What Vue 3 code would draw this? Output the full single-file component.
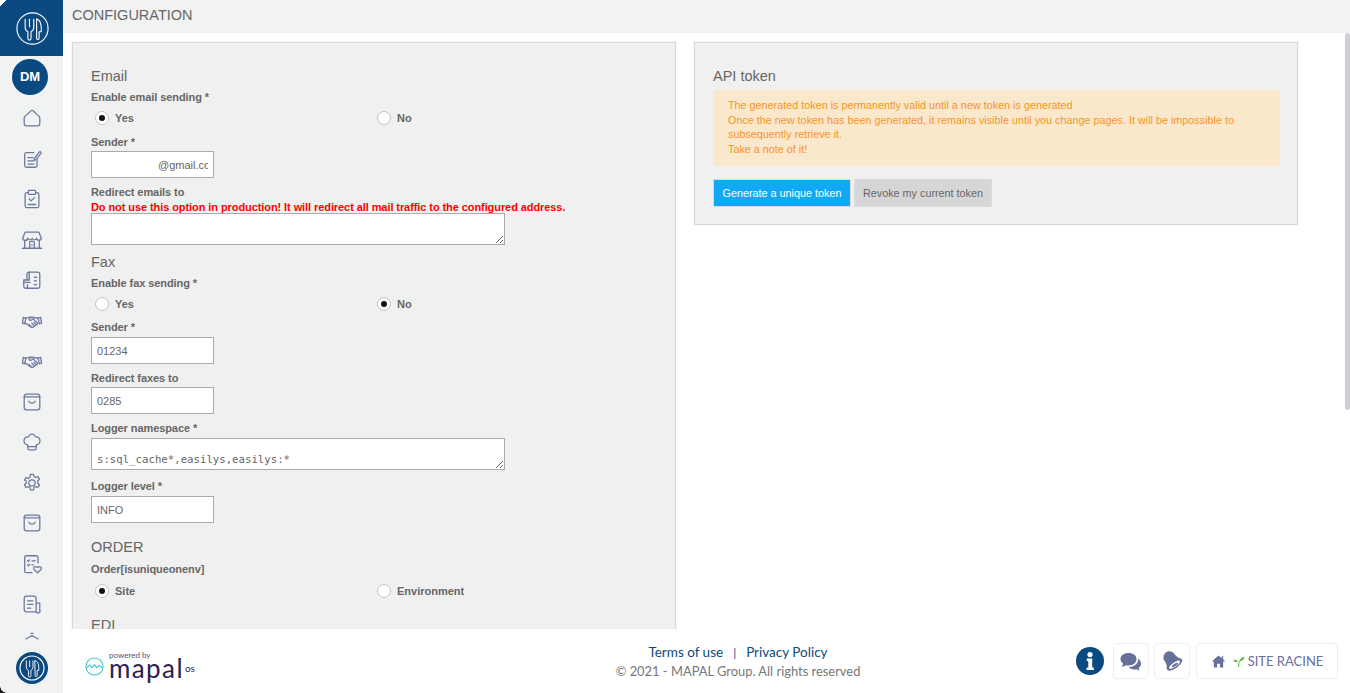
<template>
  <div class="page">
    <!-- sidebar -->
    <aside class="sidebar">
      <div class="brand">
        <svg class="brand-logo" viewBox="0 0 36 36" fill="none" stroke="#fff" stroke-width="1.2" stroke-linecap="round" stroke-linejoin="round">
          <circle cx="18" cy="18" r="17" />
          <path v-for="d in logoPaths" :key="d" :d="d" />
        </svg>
      </div>
      <div class="avatar">DM</div>
      <nav class="nav">
        <a v-for="(icon, i) in navIcons" :key="i" class="nav-item">
          <svg viewBox="0 0 24 24" fill="none" stroke="#6c789f" stroke-width="1.4" stroke-linecap="round" stroke-linejoin="round">
            <path v-for="d in icon" :key="d" :d="d" />
          </svg>
        </a>
        <div class="nav-more">
          <svg viewBox="0 0 14 8" fill="none" stroke="#6c789f" stroke-width="1.2" stroke-linecap="round">
            <path d="M1 7 7 3.5 13 7M6 1.4h2" />
          </svg>
        </div>
      </nav>
      <div class="side-bottom">
        <svg viewBox="0 0 36 36" fill="none" stroke="#fff" stroke-width="1.3" stroke-linecap="round" stroke-linejoin="round">
          <circle cx="18" cy="18" r="18" fill="#0b4a80" stroke="none" />
          <circle cx="18" cy="18" r="13.5" />
          <g transform="translate(3.6 3.6) scale(0.8)">
            <path v-for="d in logoPaths" :key="d" :d="d" />
          </g>
        </svg>
      </div>
    </aside>

    <div class="content">
      <header class="topbar">CONFIGURATION</header>

      <main class="main">
        <div class="panels">
          <!-- left panel -->
          <section class="panel">
            <h3 class="first">Email</h3>
            <label class="lbl">Enable email sending *</label>
            <div class="radios">
              <label class="radio"><input type="radio" name="mail" checked /> Yes</label>
              <label class="radio"><input type="radio" name="mail" /> No</label>
            </div>
            <label class="lbl">Sender *</label>
            <input class="field mail" type="text" value="@gmail.com" />
            <label class="lbl">Redirect emails to</label>
            <p class="danger">Do not use this option in production! It will redirect all mail traffic to the configured address.</p>
            <textarea class="area"></textarea>

            <h3>Fax</h3>
            <label class="lbl">Enable fax sending *</label>
            <div class="radios tight">
              <label class="radio"><input type="radio" name="fax" /> Yes</label>
              <label class="radio"><input type="radio" name="fax" checked /> No</label>
            </div>
            <label class="lbl gap">Sender *</label>
            <input class="field" type="text" value="01234" />
            <label class="lbl">Redirect faxes to</label>
            <input class="field" type="text" value="0285" />
            <label class="lbl gap">Logger namespace *</label>
            <textarea class="area mono" :value="loggerNs"></textarea>
            <label class="lbl gap">Logger level *</label>
            <input class="field" type="text" value="INFO" />

            <h3 class="order">ORDER</h3>
            <label class="lbl gap">Order[isuniqueonenv]</label>
            <div class="radios">
              <label class="radio"><input type="radio" name="order" checked /> Site</label>
              <label class="radio"><input type="radio" name="order" /> Environment</label>
            </div>
            <h3 class="edi">EDI</h3>
          </section>

          <!-- right panel -->
          <section class="panel token">
            <h3 class="first">API token</h3>
            <div class="alert">
              The generated token is permanently valid until a new token is generated<br />
              Once the new token has been generated, it remains visible until you change pages. It will be impossible to subsequently retrieve it.<br />
              Take a note of it!
            </div>
            <div class="actions">
              <button class="btn primary">Generate a unique token</button>
              <button class="btn">Revoke my current token</button>
            </div>
          </section>
        </div>
        <div class="scroll-thumb"></div>
      </main>

      <footer class="footer">
        <div class="mapal">
          <svg class="mapal-icon" viewBox="0 0 20 20" fill="none" stroke="#3fc3cf" stroke-width="1.1" stroke-linecap="round" stroke-linejoin="round">
            <circle cx="10" cy="10" r="9" />
            <path d="M1.5 11.5 5 8.5l2.5 3 2.5-3.5 2.5 3.5L15 9l3.5 2.5" />
          </svg>
          <div class="mapal-text">
            <span class="powered">powered by</span>
            <span class="mapal-word">mapal<small>os</small></span>
          </div>
        </div>

        <div class="legal">
          <div class="links"><a>Terms of use</a><span class="sep">|</span><a>Privacy Policy</a></div>
          <div class="copy">© 2021 - MAPAL Group. All rights reserved</div>
        </div>

        <div class="tools">
          <svg class="info" viewBox="0 0 28 28">
            <circle cx="14" cy="14" r="14" fill="#0b4a80" />
            <circle cx="14" cy="7.6" r="2.6" fill="#fff" />
            <path d="M10.8 11.6h5.4v9h1.6V23h-7.2v-2.400h1.700V14h-1.500z" fill="#fff" />
          </svg>
          <button class="tool">
            <svg viewBox="0 0 24 24" fill="#667099">
              <path d="M9.5 4C5 4 1.5 6.6 1.5 10c0 1.800 1 3.400 2.600 4.500L3 18l4.200-1.800c.7.2 1.500.3 2.300.3 4.500 0 8-2.800 8-6.500S14 4 9.500 4z" />
              <path d="M19 9.500c.1.300.1.600.1 1 0 4.300-4 7.500-9 7.500h-.5c1.300 1.500 3.400 2.400 5.800 2.400.6 0 1.200-.1 1.800-.2l3.300 1.300-.8-2.700c1.400-1 2.300-2.300 2.300-3.900 0-2.300-1.200-4.300-3-5.400z" />
            </svg>
          </button>
          <button class="tool">
            <svg viewBox="0 0 24 24">
              <g transform="rotate(-35 12 12)">
                <path d="M12 1.500c3.800 0 6 3 6 6.500 0 3.500 1.200 5.500 3 7.500H3c1.800-2 3-4 3-7.500 0-3.500 2.200-6.500 6-6.500z" fill="#667099" />
                <ellipse cx="12" cy="16.500" rx="9" ry="3.600" fill="#667099" />
                <ellipse cx="12" cy="16.500" rx="6.500" ry="2.200" fill="#fff" />
                <ellipse cx="12" cy="17" rx="3.500" ry="1.200" fill="#667099" />
              </g>
            </svg>
          </button>
          <button class="tool site">
            <svg class="house" viewBox="0 0 16 16" fill="#667099">
              <path d="M8 1.500.8 8H3v6.500h3.500v-4h3v4H13V8h2.200L13 5.900V2.500h-1.500v2z" />
            </svg>
            <svg class="sprout" viewBox="0 0 14 14" fill="#5fb432">
              <path d="M6.500 13C6.700 10 7 8 8 6c1-2 3-3.500 5.500-4-.4 2.800-2.300 4.500-5 4.800-.6 1.800-.9 3.800-1 6.200z" />
              <path d="M6.500 7.500C5.800 6 4.200 5 1.500 5.300c.6 1.900 2.500 3 5 2.200z" />
            </svg>
            SITE RACINE
          </button>
        </div>
      </footer>
    </div>
  </div>
</template>

<script setup>
const loggerNs = '\ns:sql_cache*,easilys,easilys:*'

// fork and knife of the round logo
const logoPaths = [
  'M10 8v8.500c0 2.300 1.300 4 3 5V29a1.700 1.700 0 0 0 3.400 0v-7.500c1.700-1 3-2.700 3-5V8',
  'M14.700 8v8',
  'M22.500 7.500c4 1 5.500 6.500 5 14h-2.300V29a1.400 1.400 0 0 1-2.700 0z'
]

const bag = [
  'M6 3.500h12A2.500 2.500 0 0 1 20.500 6v12a2.500 2.500 0 0 1-2.500 2.500H6A2.500 2.500 0 0 1 3.500 18V6A2.500 2.500 0 0 1 6 3.500z',
  'M3.500 6.500h17',
  'M8.500 11c1 3 6 3 7 0'
]
const shake = [
  'M2.500 8l2.800.8-1.300 6.400-2.400-.8zM21.500 8l-2.800.8 1.300 6.400 2.400-.8z',
  'M5.300 9c1.800-.2 3.500-1.300 5.200-1.300l2.800.4 5.400.9M11 8 8.800 10.500c.8 1 2.200 1 3.200 0l1.300-.9 4.800 4.900M4.200 14.500l1.800.5 4.200 3.200c.9.700 1.900.9 2.800.5l5-3.500M9 16l2 2M11.800 14.500l2.800 2.800M14 13.500l2.500 2.500'
]

// order follows the menu, top to bottom
const navIcons = [
  ['M4 10.500 10.800 4.200a1.800 1.800 0 0 1 2.400 0L20 10.500a2 2 0 0 1 .5 1.300V18a2.500 2.500 0 0 1-2.500 2.500H6A2.500 2.500 0 0 1 3.500 18v-6.200a2 2 0 0 1 .5-1.300z'],
  ['M17.500 12.500V19a2 2 0 0 1-2 2H6a2 2 0 0 1-2-2V7a2 2 0 0 1 2-2h8', 'M7.500 10.500h5.500M7.500 14h6.500M7.500 17.500h6.500', 'M14.500 11.500 20 4.300a1.200 1.200 0 0 1 1.800 1.500L16.500 12.800l-2.300.7z'],
  ['M8 5H6.500a2 2 0 0 0-2 2v12.500a2 2 0 0 0 2 2h11a2 2 0 0 0 2-2V7a2 2 0 0 0-2-2H16', 'M8 3.500a1 1 0 0 1 1-1h6a1 1 0 0 1 1 1V6a1 1 0 0 1-1 1H9a1 1 0 0 1-1-1z', 'M9 12l2 2 4-3.500M8 18h8'],
  ['M4.500 3.500h15l2.500 6a2.500 2.500 0 0 1-5 .5 2.500 2.500 0 0 1-4.800 0 2.500 2.500 0 0 1-4.800 0A2.500 2.500 0 0 1 2 9.500z', 'M4 12.500v8M20 12.500v8M1.500 21h21', 'M9.500 20.500v-6a1 1 0 0 1 1-1h3a1 1 0 0 1 1 1v6M11.500 17.500h1'],
  ['M9 3.500h9A2.500 2.500 0 0 1 20.500 6v13a2 2 0 0 1-2 2H5a2 2 0 0 1-2-2v-7h6z', 'M9 3.500A2.500 2.500 0 0 0 6.500 6v6', 'M3 14.500h7M7 17v4M14.500 9h2.500M14.500 13h2.500M14.500 17h2.500'],
  shake,
  shake,
  bag,
  ['M7.500 15.500C4.500 14.500 3 12.500 3.300 10c.4-2.500 2.500-4 4.700-3.500C9 4.500 10.500 3.500 12 3.500s3 1 4 3c2.200-.5 4.300 1 4.700 3.500.3 2.500-1.200 4.500-4.200 5.500V19a1.500 1.500 0 0 1-1.500 1.500H9A1.500 1.500 0 0 1 7.500 19z', 'M7.500 17h9'],
  ['M12 8.500a3.500 3.500 0 1 0 0 7 3.500 3.500 0 0 0 0-7z', 'M10.300 2.500h3.400l.6 2.600 1.700.9 2.500-.9 1.700 2.900-1.900 1.800v2.400l1.900 1.800-1.700 2.900-2.500-.9-1.700.9-.6 2.600h-3.400l-.6-2.600-1.700-.9-2.500.9-1.700-2.900 1.900-1.800v-2.400L3.800 8.900l1.700-2.900 2.500.9 1.700-.9z'],
  bag,
  ['M18.500 11V5a2 2 0 0 0-2-2H6a2 2 0 0 0-2 2v14.500a2 2 0 0 0 2 2h6', 'M7 8l1 1 1.500-1.500M12 8.500h3.500M7 13l1 1 1.500-1.500M12 13h1.500', 'M18 21.500l-3.500-3.300c-2-2 .8-4.700 3.500-2.300 2.700-2.400 5.500.3 3.500 2.300z'],
  ['M16.500 20.500H6A2.500 2.500 0 0 1 3.500 18V6A2.500 2.500 0 0 1 6 3.500h8A2.500 2.500 0 0 1 16.500 6v14.500a2 2 0 0 0 4-2V11h-4', 'M7 8.500h6M7 12.500h6M7 16.500h3.500']
]
</script>

<style>
html,
body {
  margin: 0;
  height: 100%;
  overflow: hidden;
}
</style>

<style scoped>
.page {
  display: flex;
  width: 1350px;
  height: 693px;
  overflow: hidden;
  font-family: "Liberation Sans", Arial, sans-serif;
  color: #666;
  background: #fff;
}

/* sidebar */
.sidebar {
  position: relative;
  flex: 0 0 63px;
  display: flex;
  flex-direction: column;
  align-items: center;
  background: #f1f3f3;
  overflow: hidden;
}

/* rounded window corners of the screenshot */
.sidebar::before,
.sidebar::after {
  content: "";
  position: absolute;
  left: 0;
  width: 7px;
  height: 7px;
  z-index: 1;
}

.sidebar::before {
  top: 0;
  background: linear-gradient(135deg, #fff 45%, transparent 50%);
}

.sidebar::after {
  bottom: 0;
  background: radial-gradient(circle at 100% 0, transparent 6.5px, #222 7px);
}

.brand {
  align-self: stretch;
  height: 56px;
  flex: none;
  display: flex;
  align-items: center;
  justify-content: center;
  background: #0b4a80;
}

.brand-logo {
  width: 33px;
  height: 33px;
  margin-left: 1px;
}

.avatar {
  flex: none;
  width: 36px;
  height: 36px;
  margin: 3px 3px 0 0;
  border-radius: 50%;
  background: #0b4a80;
  color: #fff;
  font-size: 13px;
  font-weight: bold;
  line-height: 36px;
  text-align: center;
}

.nav {
  flex: none;
  display: flex;
  flex-direction: column;
  align-items: center;
  padding-top: 3px;
}

.nav-item {
  width: 22px;
  height: 40.5px;
  margin-left: 1px;
  display: flex;
  align-items: center;
  justify-content: center;
}

.nav-item svg {
  width: 22px;
  height: 22px;
}

.nav-more {
  height: 12px;
  margin-top: 7px;
}

.nav-more svg {
  display: block;
  width: 14px;
  height: 8px;
}

.side-bottom {
  position: absolute;
  left: 0;
  right: 0;
  bottom: 0;
  height: 50px;
  display: flex;
  justify-content: center;
  padding-top: 9px;
  box-sizing: border-box;
  background: #f1f3f3;
}

.side-bottom svg {
  width: 32px;
  height: 32px;
  margin-left: 1px;
}

/* content */
.content {
  flex: 1;
  min-width: 0;
  display: flex;
  flex-direction: column;
}

.topbar {
  flex: none;
  height: 33px;
  padding-left: 9px;
  background: #f1f3f3;
  font-size: 14.5px;
  line-height: 31px;
}

.main {
  position: relative;
  flex: 1;
  min-height: 0;
  overflow: hidden;
  padding: 9px 0 0 9px;
}

.panels {
  display: flex;
  align-items: flex-start;
  gap: 18px;
}

.panel {
  width: 604px;
  box-sizing: border-box;
  padding: 0 18px;
  background: #f0f0f0;
  border: 1px solid #d9d9d9;
  box-shadow: 0 0 1px #ccc;
}

.token {
  height: 183px;
}

h3 {
  margin: 8px 0 5px;
  font-size: 14.5px;
  font-weight: normal;
  line-height: 18px;
  color: #666;
}

h3.first {
  margin-top: 24px;
  margin-bottom: 5px;
}

h3.order {
  margin-top: 15px;
  margin-bottom: 6px;
}

h3.edi {
  margin-top: 13px;
}

.lbl {
  display: block;
  font-size: 11px;
  font-weight: bold;
  letter-spacing: -0.08px;
  line-height: 14px;
  margin-bottom: 2px;
}

.lbl.gap {
  margin-bottom: 3px;
}

.radios {
  display: grid;
  grid-template-columns: 282px 282px;
  height: 24px;
  margin: 2px 0 5px;
}

.radios.tight {
  margin-bottom: 4px;
}

.radio {
  display: flex;
  align-items: center;
  gap: 6px;
  padding-left: 4px;
  font-size: 11px;
  font-weight: bold;
}

.radio input {
  appearance: none;
  width: 14px;
  height: 14px;
  margin: 0;
  flex: none;
  display: grid;
  place-items: center;
  background: #fff;
  border: 1px solid #c4c4c4;
  border-radius: 50%;
}

.radio input:checked::before {
  content: "";
  width: 6px;
  height: 6px;
  border-radius: 50%;
  background: #111;
}

.field {
  display: block;
  width: 123px;
  height: 27px;
  box-sizing: border-box;
  margin-bottom: 7px;
  padding: 0 5px;
  background: #fff;
  border: 1px solid #aaa;
  border-radius: 0;
  outline: none;
  color: #666;
  font: 11px "Liberation Sans", Arial, sans-serif;
}

.field.mail {
  padding-left: 66px;
}

.area {
  display: block;
  width: 414px;
  height: 32px;
  box-sizing: border-box;
  margin: 0 0 7px;
  padding: 0 6px;
  background: #fff;
  border: 1px solid #aaa;
  border-radius: 0;
  outline: none;
  color: #666;
}

.area.mono {
  overflow: hidden;
  padding: 0 5px;
  font: 10.7px/14px "DejaVu Sans Mono", monospace;
  margin-bottom: 9px;
}

.danger {
  margin: 0;
  color: #f00;
  font-size: 11px;
  font-weight: bold;
  letter-spacing: -0.08px;
  line-height: 12px;
}

.alert {
  width: 537px;
  padding: 8px 15px 10px;
  background: #fae8cd;
  border-radius: 4px;
  color: #f7941d;
  font-size: 10.8px;
  line-height: 14.5px;
}

.actions {
  display: flex;
  gap: 3px;
  margin-top: 13px;
}

.btn {
  width: 138px;
  height: 28px;
  padding: 0;
  background: #d6d6d6;
  border: 1px solid #dcdcdc;
  color: #666;
  font: 10.8px "Liberation Sans", Arial, sans-serif;
}

.btn.primary {
  background: #12a9f4;
  color: #fff;
}

.scroll-thumb {
  position: absolute;
  top: 0;
  right: 0;
  width: 5px;
  height: 377px;
  background: #cfd0d4;
  border-radius: 3px;
}

/* footer */
.footer {
  flex: none;
  height: 64px;
  display: flex;
  align-items: center;
  padding: 0 12px 0 22px;
  background: #fff;
}

.mapal {
  display: flex;
  align-items: center;
  gap: 5px;
  width: 112px;
  margin-top: 4px;
}

.mapal-icon {
  flex: none;
  width: 19px;
  height: 19px;
  margin-top: 6px;
}

.mapal-text {
  display: flex;
  flex-direction: column;
  color: #2c2150;
  font-family: Lato, sans-serif;
}

.powered {
  margin-top: 2px;
  font-size: 8px;
  line-height: 8px;
  color: #55506e;
}

.mapal-word {
  font-size: 26px;
  line-height: 19px;
  letter-spacing: 1.4px;
  white-space: nowrap;
}

.mapal-word small {
  font-size: 10px;
  vertical-align: 6px;
  margin-left: 1px;
  letter-spacing: 0;
}

.legal {
  width: 246px;
  margin-left: 418px;
  padding-top: 2px;
  text-align: center;
  font-family: Lato, sans-serif;
  line-height: 19px;
}

.links {
  font-size: 13.5px;
  color: #0b4a80;
}

.sep {
  margin: 0 10px;
  font-size: 12px;
}

.copy {
  font-size: 12.9px;
  color: #777;
}

.tools {
  margin-left: auto;
  display: flex;
  align-items: center;
  gap: 5px;
}

.info {
  width: 28px;
  height: 28px;
  margin-right: 4px;
}

.tool {
  width: 36px;
  height: 36px;
  padding: 0;
  display: flex;
  align-items: center;
  justify-content: center;
  background: #fff;
  border: 1px solid #eee;
  border-radius: 4px;
}

.tool svg {
  width: 24px;
  height: 24px;
}

.tool.site {
  width: 142px;
  margin-left: 1px;
  gap: 3px;
  color: #667099;
  font: 13px Lato, sans-serif;
}

.tool.site .house {
  width: 15px;
  height: 15px;
  margin-right: 3px;
}

.tool.site .sprout {
  width: 13px;
  height: 13px;
}
</style>
